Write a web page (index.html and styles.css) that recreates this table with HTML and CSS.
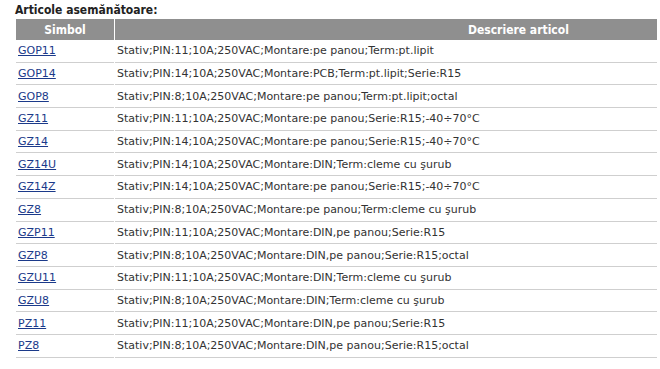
FILE: index.html
```html
<!DOCTYPE html>
<html>
<head>
<meta charset="utf-8">
<link rel="stylesheet" href="styles.css">
</head>
<body>
<div class="wrap">
  <h3 class="title">Articole asemănătoare:</h3>
  <table class="grid">
    <thead>
      <tr><th class="c1">Simbol</th><th class="c2">Descriere articol</th></tr>
    </thead>
    <tbody>
      <tr><td class="c1"><a href="#">GOP11</a></td><td class="c2">Stativ;PIN:11;10A;250VAC;Montare:pe panou;Term:pt.lipit</td></tr>
      <tr><td class="c1"><a href="#">GOP14</a></td><td class="c2">Stativ;PIN:14;10A;250VAC;Montare:PCB;Term:pt.lipit;Serie:R15</td></tr>
      <tr><td class="c1"><a href="#">GOP8</a></td><td class="c2">Stativ;PIN:8;10A;250VAC;Montare:pe panou;Term:pt.lipit;octal</td></tr>
      <tr><td class="c1"><a href="#">GZ11</a></td><td class="c2">Stativ;PIN:11;10A;250VAC;Montare:pe panou;Serie:R15;-40÷70°C</td></tr>
      <tr><td class="c1"><a href="#">GZ14</a></td><td class="c2">Stativ;PIN:14;10A;250VAC;Montare:pe panou;Serie:R15;-40÷70°C</td></tr>
      <tr><td class="c1"><a href="#">GZ14U</a></td><td class="c2">Stativ;PIN:14;10A;250VAC;Montare:DIN;Term:cleme cu şurub</td></tr>
      <tr><td class="c1"><a href="#">GZ14Z</a></td><td class="c2">Stativ;PIN:14;10A;250VAC;Montare:pe panou;Serie:R15;-40÷70°C</td></tr>
      <tr><td class="c1"><a href="#">GZ8</a></td><td class="c2">Stativ;PIN:8;10A;250VAC;Montare:pe panou;Term:cleme cu şurub</td></tr>
      <tr><td class="c1"><a href="#">GZP11</a></td><td class="c2">Stativ;PIN:11;10A;250VAC;Montare:DIN,pe panou;Serie:R15</td></tr>
      <tr><td class="c1"><a href="#">GZP8</a></td><td class="c2">Stativ;PIN:8;10A;250VAC;Montare:DIN,pe panou;Serie:R15;octal</td></tr>
      <tr><td class="c1"><a href="#">GZU11</a></td><td class="c2">Stativ;PIN:11;10A;250VAC;Montare:DIN;Term:cleme cu şurub</td></tr>
      <tr><td class="c1"><a href="#">GZU8</a></td><td class="c2">Stativ;PIN:8;10A;250VAC;Montare:DIN;Term:cleme cu şurub</td></tr>
      <tr><td class="c1"><a href="#">PZ11</a></td><td class="c2">Stativ;PIN:11;10A;250VAC;Montare:DIN,pe panou;Serie:R15</td></tr>
      <tr><td class="c1"><a href="#">PZ8</a></td><td class="c2">Stativ;PIN:8;10A;250VAC;Montare:DIN,pe panou;Serie:R15;octal</td></tr>
    </tbody>
  </table>
</div>
</body>
</html>
```
FILE: styles.css
```css
html, body {
  margin: 0;
  padding: 0;
  background: #ffffff;
}
body {
  font-family: "DejaVu Sans", sans-serif;
  font-size: 11px;
  color: #333333;
}
.wrap {
  padding: 2px 3px 0 15px;
}
.title {
  margin: 0;
  font-family: "DejaVu Sans Condensed", "DejaVu Sans", sans-serif;
  font-size: 12px;
  font-weight: bold;
  line-height: 17px;
  color: #222222;
}
.grid {
  width: 643px;
  border-collapse: separate;
  border-spacing: 1px 0;
  table-layout: fixed;
}
.grid th {
  background: #8f8f8f;
  color: #ffffff;
  font-family: "DejaVu Sans Condensed", "DejaVu Sans", sans-serif;
  font-size: 12px;
  font-weight: bold;
  height: 21px;
  padding: 0;
}
.grid th.c1 {
  width: 98px;
  text-align: center;
}
.grid th.c2 {
  text-align: left;
  padding-left: 353px;
}
.grid td {
  height: 21.7px;
  padding: 0 0 0 2px;
  border-bottom: 1px solid #cfcfcf;
  white-space: nowrap;
}
.grid a {
  color: #1b3a8a;
  text-decoration: underline;
}
```
